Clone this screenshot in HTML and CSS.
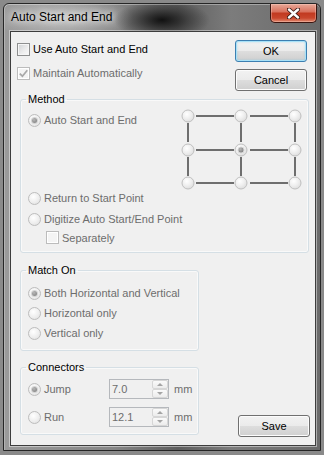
FILE: index.html
```html
<!DOCTYPE html>
<html>
<head>
<meta charset="utf-8">
<title>Auto Start and End</title>
<link rel="stylesheet" href="styles.css">
</head>
<body>
<div class="window">
  <div class="titlebar">
    <span class="title">Auto Start and End</span>
    <button class="close" aria-label="Close">
      <svg width="13" height="11" viewBox="0 0 13 11">
        <path d="M2 1.5 L11 9.5 M11 1.5 L2 9.5" stroke="#3a1a14" stroke-width="4.2" stroke-linecap="round" fill="none"/>
        <path d="M2 1.5 L11 9.5 M11 1.5 L2 9.5" stroke="#ffffff" stroke-width="2.4" stroke-linecap="round" fill="none"/>
      </svg>
    </button>
  </div>
  <div class="client">
    <div class="top">
      <div class="checks">
        <label class="row"><span class="cb"></span><span>Use Auto Start and End</span></label>
        <label class="row dis"><span class="cb cb-dis"><svg width="11" height="11" viewBox="0 0 11 11"><path d="M1.8 5.6 L4.4 8.2 L9.3 2.2" stroke="#a8a8a8" stroke-width="1.7" fill="none"/></svg></span><span>Maintain Automatically</span></label>
      </div>
      <div class="buttons">
        <button class="btn ok">OK</button>
        <button class="btn">Cancel</button>
      </div>
    </div>

    <fieldset class="group method">
      <legend>Method</legend>
      <div class="method-top">
        <div class="row dis rad first"><span class="radio on"></span><span>Auto Start and End</span></div>
        <svg class="grid" width="121" height="81" viewBox="0 0 121 81">
          <defs>
            <radialGradient id="rg" cx="40%" cy="35%" r="70%">
              <stop offset="0" stop-color="#ffffff"/>
              <stop offset="0.55" stop-color="#eeeeee"/>
              <stop offset="1" stop-color="#dcdcdc"/>
            </radialGradient>
            <radialGradient id="dot" cx="40%" cy="35%" r="70%">
              <stop offset="0" stop-color="#b8b8b8"/>
              <stop offset="1" stop-color="#787878"/>
            </radialGradient>
          </defs>
          <g stroke="#6e6e6e" stroke-width="2">
            <line x1="15" y1="7" x2="53" y2="7"/>
            <line x1="69" y1="7" x2="107" y2="7"/>
            <line x1="15" y1="41" x2="53" y2="41"/>
            <line x1="69" y1="41" x2="107" y2="41"/>
            <line x1="15" y1="74" x2="53" y2="74"/>
            <line x1="69" y1="74" x2="107" y2="74"/>
            <line x1="7" y1="14" x2="7" y2="33"/>
            <line x1="7" y1="48" x2="7" y2="67"/>
            <line x1="60" y1="14" x2="60" y2="33"/>
            <line x1="60" y1="48" x2="60" y2="67"/>
            <line x1="114" y1="14" x2="114" y2="33"/>
            <line x1="114" y1="48" x2="114" y2="67"/>
          </g>
          <g fill="url(#rg)" stroke="#c0c0c0" stroke-width="1">
            <circle cx="7" cy="7" r="6"/>
            <circle cx="60" cy="7" r="6"/>
            <circle cx="114" cy="7" r="6"/>
            <circle cx="7" cy="41" r="6"/>
            <circle cx="60" cy="41" r="6"/>
            <circle cx="114" cy="41" r="6"/>
            <circle cx="7" cy="74" r="6"/>
            <circle cx="60" cy="74" r="6"/>
            <circle cx="114" cy="74" r="6"/>
          </g>
          <circle cx="60" cy="41" r="3" fill="url(#dot)" stroke="#d4d4d4" stroke-width="1"/>
        </svg>
      </div>
      <div class="row dis rad"><span class="radio"></span><span>Return to Start Point</span></div>
      <div class="row dis rad dig"><span class="radio"></span><span>Digitize Auto Start/End Point</span></div>
      <div class="row dis sep"><span class="cb cb-dis"></span><span>Separately</span></div>
    </fieldset>

    <fieldset class="group match">
      <legend>Match On</legend>
      <div class="row dis rad"><span class="radio on"></span><span>Both Horizontal and Vertical</span></div>
      <div class="row dis rad"><span class="radio"></span><span>Horizontal only</span></div>
      <div class="row dis rad"><span class="radio"></span><span>Vertical only</span></div>
    </fieldset>

    <div class="bottom">
      <fieldset class="group conn">
        <legend>Connectors</legend>
        <div class="crow">
          <div class="row dis lab"><span class="radio on"></span><span>Jump</span></div>
          <div class="spin"><span class="val">7.0</span><span class="arrows"><span class="ab up"></span><span class="ab down"></span></span></div>
          <span class="unit dis">mm</span>
        </div>
        <div class="crow second">
          <div class="row dis lab"><span class="radio"></span><span>Run</span></div>
          <div class="spin"><span class="val">12.1</span><span class="arrows"><span class="ab up"></span><span class="ab down"></span></span></div>
          <span class="unit dis">mm</span>
        </div>
      </fieldset>
      <button class="btn save">Save</button>
    </div>
  </div>
</div>
</body>
</html>
```

FILE: styles.css
```css
* { box-sizing: border-box; }

html, body {
  margin: 0;
  padding: 0;
}

body {
  width: 324px;
  height: 455px;
  overflow: hidden;
  background: #8a8a8a;
  font-family: "Liberation Sans", Arial, sans-serif;
  font-size: 11px;
  color: #000;
}

.window {
  margin: 3px 0 0 3px;
  width: 318px;
  height: 448px;
  border: 1px solid #262626;
  border-radius: 6px 6px 0 0;
  padding: 0 4px 4px 6px;
  display: flex;
  flex-direction: column;
  background:
    radial-gradient(ellipse 48px 20px at 158px 16px, rgba(12,12,12,0.95), rgba(40,40,40,0.55) 55%, rgba(0,0,0,0) 100%),
    radial-gradient(ellipse 70px 22px at 60px 14px, rgba(215,215,215,0.75), rgba(215,215,215,0) 100%),
    linear-gradient(90deg, #9a9a9a 0%, #868686 35%, #5e5e5e 55%, #7c7c7c 72%, #6a6a6a 100%);
  box-shadow: inset 0 1px 0 rgba(255,255,255,0.35), inset 1px 0 0 rgba(255,255,255,0.25);
}

.titlebar {
  height: 27px;
  flex: none;
  display: flex;
  justify-content: space-between;
  align-items: flex-start;
  margin-right: -1px;
}

.title {
  margin-left: 1px;
  padding-top: 6px;
  font-size: 12px;
  line-height: 14px;
  color: #000;
  text-shadow: 0 0 6px rgba(255,255,255,0.95), 0 0 10px rgba(255,255,255,0.7);
}

.close {
  width: 47px;
  height: 19px;
  padding: 0;
  border: 1px solid #3b1510;
  border-top: none;
  border-radius: 0 0 5px 5px;
  background: linear-gradient(#e7a898 0%, #d9735f 42%, #c23a21 52%, #c9462c 78%, #e28a70 100%);
  box-shadow: inset 0 0 0 1px rgba(255,220,210,0.35);
  display: flex;
  align-items: center;
  justify-content: center;
}

.client {
  height: 415px;
  flex: none;
  border: 1px solid #3d3d3d;
  background: #f0f0f0;
  box-shadow: 0 0 0 1px rgba(255,255,255,0.45);
}

.row {
  display: flex;
  align-items: center;
  height: 20px;
  gap: 3px;
  white-space: nowrap;
}

.dis { color: #6d6d6d; }

.top {
  height: 59px;
  display: flex;
  justify-content: space-between;
  padding: 0 8px 0 6px;
}

.checks {
  padding-top: 7px;
  display: flex;
  flex-direction: column;
  gap: 4px;
}

.buttons {
  padding-top: 8px;
  display: flex;
  flex-direction: column;
  gap: 7px;
}

.cb {
  width: 13px;
  height: 13px;
  flex: none;
  border: 1px solid #8e8f8f;
  background: linear-gradient(135deg, #cfd1d4 0%, #eeeeee 60%, #fafafa 100%);
  box-shadow: inset 0 0 0 1px #f6f6f6;
  display: flex;
  align-items: center;
  justify-content: center;
}

.cb-dis {
  border-color: #bcbcbc;
  background: #f4f4f4;
  box-shadow: inset 0 0 0 1px #ffffff;
}

.radio {
  width: 13px;
  height: 13px;
  flex: none;
  position: relative;
  border-radius: 50%;
  border: 1px solid #bdbdbd;
  background: radial-gradient(circle at 40% 35%, #ffffff 0%, #eeeeee 55%, #dcdcdc 100%);
}

.radio.on::after {
  content: "";
  position: absolute;
  left: 3px;
  top: 3px;
  width: 5px;
  height: 5px;
  border-radius: 50%;
  background: radial-gradient(circle at 40% 35%, #b8b8b8, #787878);
  box-shadow: 0 0 0 1px #d4d4d4;
}

.btn {
  width: 72px;
  height: 22px;
  padding: 0;
  font-family: "Liberation Sans", Arial, sans-serif;
  font-size: 11px;
  color: #000;
  border: 1px solid #707070;
  border-radius: 3px;
  background: linear-gradient(#f2f2f2 0%, #ebebeb 48%, #dddddd 52%, #cfcfcf 100%);
  box-shadow: inset 0 0 0 1px #fcfcfc;
}

.btn.ok {
  border-color: #3c7fb1;
  box-shadow: inset 0 0 0 1px #a8e1f7, inset 0 0 2px 1px rgba(100,200,240,0.45);
}

.group {
  min-width: 0;
  border: 1px solid #d5dfe5;
  border-radius: 3px;
  padding: 0;
  box-shadow: inset 0 0 0 1px rgba(255,255,255,0.6);
}

.group legend {
  margin-left: 5px;
  padding: 0 2px;
  font-size: 11px;
  line-height: 13px;
  color: #000;
}

.method {
  margin: 2px 6px 0 9px;
  padding-bottom: 6px;
}

.method-top {
  height: 82px;
  display: flex;
  align-items: flex-start;
}

.method-top .first {
  flex: 1;
  margin-top: 4px;
}

.grid {
  margin-top: 3px;
  margin-right: 6px;
  overflow: visible;
  flex: none;
}

.rad { margin-left: 7px; }

.dig { margin-top: 1px; }

.sep {
  height: 17px;
  margin-left: 25px;
}

.match {
  width: 179px;
  margin: 11px 0 0 9px;
  padding: 6px 0 7px 0;
}

.bottom {
  display: flex;
  justify-content: space-between;
  align-items: flex-end;
  margin: 10px 5px 0 9px;
}

.conn {
  width: 179px;
  margin: 0;
  padding: 5px 0 7px 0;
}

.save { margin-bottom: -2px; }

.crow {
  display: flex;
  align-items: center;
  height: 20px;
}

.crow.second { margin-top: 8px; }

.lab {
  width: 81px;
  margin-left: 7px;
  flex: none;
}

.spin {
  width: 60px;
  height: 20px;
  flex: none;
  border: 1px solid #b5b8bc;
  background: #f0f0f0;
  display: flex;
  align-items: center;
  justify-content: space-between;
  padding-left: 2px;
  color: #6d6d6d;
}

.arrows {
  width: 16px;
  height: 18px;
  display: flex;
  flex-direction: column;
  gap: 0;
}

.ab {
  flex: 1;
  border: 1px solid #d6d6d6;
  border-radius: 2px;
  background: linear-gradient(#fafafa, #ececec);
  display: flex;
  align-items: center;
  justify-content: center;
}

.ab.up::before {
  content: "";
  border-left: 3px solid transparent;
  border-right: 3px solid transparent;
  border-bottom: 3px solid #a4a4a4;
}

.ab.down::before {
  content: "";
  border-left: 3px solid transparent;
  border-right: 3px solid transparent;
  border-top: 3px solid #a4a4a4;
}

.unit { margin-left: 5px; }
```
